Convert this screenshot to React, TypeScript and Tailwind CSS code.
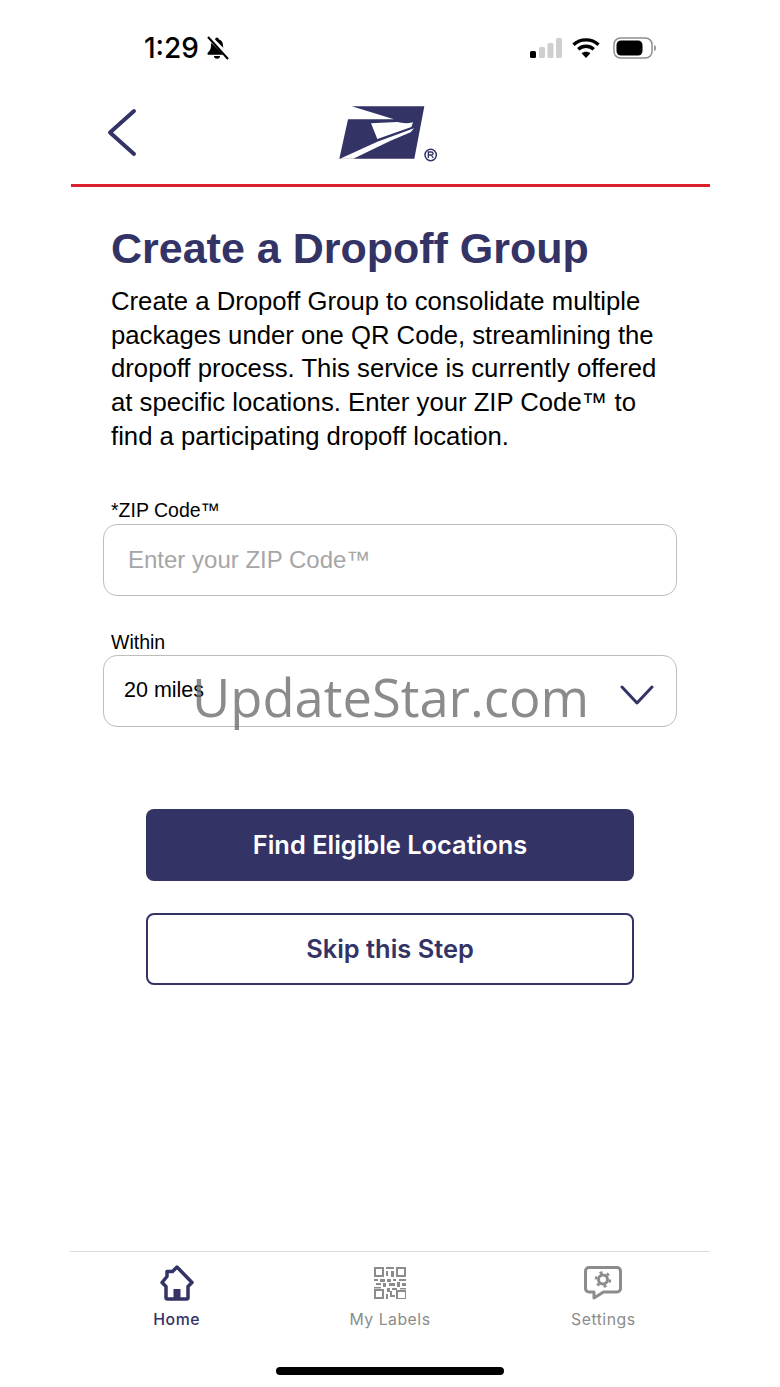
import React from "react";

const NAVY = "#333366";

function BellOff() {
  return (
    <svg width="24" height="24" viewBox="0 0 24 24" className="ml-[6px]">
      <path d="M12 1.500c-1 0-1.700.8-1.700 1.800C7.300 4.100 6 6.700 6 9.600c0 3.400-1.100 5.400-3.400 7.200v2h18.800v-2C19.100 15 18 13 18 9.600c0-2.900-1.300-5.500-4.300-6.300C13.700 2.300 13 1.500 12 1.500z" fill="#000" />
      <path d="M9 20a3 2.800 0 0 0 6 0z" fill="#000" />
      <path d="M3.500 0.500 24 21" stroke="#fff" strokeWidth="5" />
      <path d="M3 1 23 23" stroke="#000" strokeWidth="2" />
    </svg>
  );
}

function StatusRight() {
  return (
    <div className="flex items-center gap-[10px]">
      <svg width="32" height="20" viewBox="0 0 32 20">
        <rect x="0" y="13" width="6" height="7" rx="1.500" fill="#000" />
        <rect x="9" y="9" width="6" height="11" rx="1.500" fill="#cfcfcf" />
        <rect x="17.500" y="5" width="6" height="15" rx="1.500" fill="#cfcfcf" />
        <rect x="26" y="0" width="6" height="20" rx="1.500" fill="#cfcfcf" />
      </svg>
      <svg width="28" height="20" viewBox="0 0 28 20" fill="none" stroke="#000" strokeWidth="3.400">
        <path d="M1.500 6.800C8.500 0.200 19.500 0.200 26.500 6.800" />
        <path d="M6.200 11.300c4.500-4 11.100-4 15.600 0" />
        <path d="M14 20 9.600 15.300c2.600-2 6.200-2 8.800 0z" fill="#000" stroke="none" />
      </svg>
      <svg width="44" height="22" viewBox="0 0 44 22" className="ml-[3px]">
        <rect x="1" y="1" width="38" height="20" rx="6.500" fill="none" stroke="#8e8e8e" strokeWidth="1.500" />
        <rect x="3.500" y="3.500" width="26" height="15" rx="4.500" fill="#000" />
        <path d="M41 8c1.500.5 2.200 1.500 2.200 3s-.7 2.500-2.200 3z" fill="#9a9a9a" />
      </svg>
    </div>
  );
}

function Logo() {
  return (
    <svg width="140" height="80" viewBox="0 0 420 240">
      <path d="M95 46H313L283 203H58L84 85L222 85Z" fill={NAVY} />
      <path d="M153 97L232 93C246 97 262 98 279 94L274 108L172 144Z" fill="#fff" />
      <path d="M60 203L172 152L282 112L272 124L210 150L100 203Z" fill="#fff" />
      <circle cx="332" cy="192" r="17" fill="none" stroke={NAVY} strokeWidth="4.500" />
      <path d="M325 201V183H334C341 183 341 192 334 192H325M334 192L340 201" fill="none" stroke={NAVY} strokeWidth="4" />
    </svg>
  );
}

function HomeIcon() {
  return (
    <svg width="36" height="36" viewBox="0 0 36 36" fill="none">
      <path
        d="M18 2 33 17.500 29 21.500V32.500C29 33.500 28.500 34 27.500 34H8.500C7.500 34 7 33.500 7 32.500V21.500L3 17.500 8 11.500V6.500H13.500Z"
        stroke={NAVY}
        strokeWidth="3.500"
        strokeLinejoin="round"
      />
      <rect x="14.500" y="24" width="7" height="10" fill={NAVY} />
    </svg>
  );
}

function QrIcon() {
  const c = "#8c8c8c";
  return (
    <svg width="32" height="32" viewBox="0 0 32 32" fill="none">
      <rect x="1" y="1" width="8" height="8" stroke={c} strokeWidth="2" />
      <rect x="23" y="1" width="8" height="8" stroke={c} strokeWidth="2" />
      <rect x="1" y="23" width="8" height="8" stroke={c} strokeWidth="2" />
      <rect x="12" y="0" width="8" height="2" fill={c} />
      <rect x="12" y="4" width="2" height="5" fill={c} />
      <rect x="17" y="4" width="3" height="6" fill={c} />
      <rect x="0" y="12" width="4" height="2" fill={c} />
      <rect x="6" y="12" width="5" height="3" fill={c} />
      <rect x="13" y="12" width="4" height="3" fill={c} />
      <rect x="19" y="12" width="3" height="2" fill={c} />
      <rect x="25" y="12" width="7" height="2" fill={c} />
      <rect x="2" y="16" width="5" height="2" fill={c} />
      <rect x="9" y="16" width="3" height="4" fill={c} />
      <rect x="15" y="16" width="6" height="3" fill={c} />
      <rect x="23" y="15" width="3" height="5" fill={c} />
      <rect x="28" y="16" width="4" height="3" fill={c} />
      <rect x="0" y="20" width="7" height="1.500" fill={c} />
      <rect x="13" y="21" width="3" height="4" fill={c} />
      <rect x="18" y="21" width="5" height="2" fill={c} />
      <rect x="26" y="21" width="6" height="1.500" fill={c} />
      <rect x="12" y="27" width="2" height="5" fill={c} />
      <rect x="16" y="24" width="2" height="6" fill={c} />
      <rect x="16" y="28" width="5" height="2" fill={c} />
      <rect x="23" y="24" width="9" height="8" stroke={c} strokeWidth="2" />
    </svg>
  );
}

function SettingsIcon() {
  const c = "#8c8c8c";
  return (
    <svg width="38" height="34" viewBox="0 0 38 34" fill="none">
      <path
        d="M5 1.500H33C35 1.500 36.500 3 36.500 5V22.500C36.500 24.500 35 26 33 26H19.500L10 32V26H5C3 26 1.500 24.500 1.500 22.500V5C1.500 3 3 1.500 5 1.500Z"
        stroke={c}
        strokeWidth="3"
        strokeLinejoin="round"
      />
      <circle cx="19" cy="13.500" r="4.500" stroke={c} strokeWidth="3" />
      <circle cx="19" cy="13.500" r="7" stroke={c} strokeWidth="2.500" strokeDasharray="3 4.330" />
    </svg>
  );
}

function Tab({ icon, label, active }: { icon: React.ReactNode; label: string; active?: boolean }) {
  return (
    <div className="flex flex-col items-center">
      <div className="flex h-[36px] items-center justify-center">{icon}</div>
      <div
        className={`mt-[7px] text-[15.800px] leading-[24px] tracking-[0.5px] ${active ? "font-medium text-[#333366]" : "text-[#8c8c8c]"}`}
      >
        {label}
      </div>
    </div>
  );
}

export default function App() {
  return (
    <div className="relative h-[1387px] w-[780px] overflow-hidden bg-white font-['Liberation_Sans',Arial,sans-serif] text-black">
      <div className="flex h-[90px] items-start justify-between pl-[144px] pr-[123px] pt-[32px]">
        <div className="flex h-[32px] items-center font-['Inter',sans-serif] text-[28px] font-medium leading-[32px]">
          1:29
          <BellOff />
        </div>
        <div className="flex h-[32px] items-center">
          <StatusRight />
        </div>
      </div>

      <div className="mx-[70px]">
        <div className="flex h-[94px] items-start">
          <div className="ml-[36px] mt-[17px] w-[32px]">
            <svg width="32" height="50" viewBox="0 0 32 50" fill="none">
              <path d="M28 4 4 25.500 28 47" stroke={NAVY} strokeWidth="4" strokeLinecap="round" strokeLinejoin="round" />
            </svg>
          </div>
          <div className="ml-[182px] mt-[1px]">
            <Logo />
          </div>
        </div>
        <div className="ml-[1px] h-[3px] bg-[#d9202c]" />

        <div className="ml-[41px] mt-[35px]">
          <h1 className="text-[43px] font-bold leading-[52px] text-[#333366]">Create a Dropoff Group</h1>
          <p className="mt-[11px] text-[25.700px] leading-[33.700px] text-black">
            Create a Dropoff Group to consolidate multiple
            <br />
            packages under one QR Code, streamlining the
            <br />
            dropoff process. This service is currently offered
            <br />
            at specific locations. Enter your ZIP Code™ to
            <br />
            find a participating dropoff location.
          </p>
        </div>

        <div className="mx-[33px] mt-[44px]">
          <div className="pl-[8px] text-[19.500px] leading-[24px]">*ZIP Code™</div>
          <div className="mt-[2px] flex h-[72px] items-center rounded-[14px] border border-[#bdbdbd] pl-[24px]">
            <span className="text-[24px] text-[#a6a6a6]">Enter your ZIP Code™</span>
          </div>

          <div className="mt-[34px] pl-[8px] text-[19.500px] leading-[24px]">Within</div>
          <div className="mt-[1px] flex h-[72px] items-center justify-between rounded-[14px] border border-[#bdbdbd] pl-[20px] pr-[22px]">
            <span className="text-[21.500px]">20 miles</span>
            <svg width="34" height="22" viewBox="0 0 34 22" fill="none" className="mt-[8px]">
              <path d="M2 3 17 19 32 3" stroke={NAVY} strokeWidth="3" strokeLinecap="round" strokeLinejoin="round" />
            </svg>
          </div>
        </div>

        <div className="mx-[76px] mt-[82px] flex flex-col gap-[32px] font-['Inter',sans-serif] text-[25.400px] font-semibold">
          <button className="h-[72px] rounded-[8px] bg-[#333366] pt-[1px] text-white">Find Eligible Locations</button>
          <button className="h-[72px] rounded-[8px] border-2 border-[#333366] bg-white pt-[1px] text-[#333366]">Skip this Step</button>
        </div>

        <div className="mt-[266px] grid grid-cols-3 border-t border-[#dcdcdc] pt-[13px] font-['Inter',sans-serif]">
          <Tab icon={<HomeIcon />} label="Home" active />
          <Tab icon={<QrIcon />} label="My Labels" />
          <Tab icon={<SettingsIcon />} label="Settings" />
        </div>

        <div className="mt-[35px] flex justify-center">
          <div className="h-[8px] w-[228px] rounded-full bg-black" />
        </div>
      </div>

      <div className="pointer-events-none absolute left-[192px] top-[659px] font-['Open_Sans',sans-serif] text-[52.500px] leading-[76px] text-[#6e6e6e]/80">
        UpdateStar.com
      </div>
    </div>
  );
}
